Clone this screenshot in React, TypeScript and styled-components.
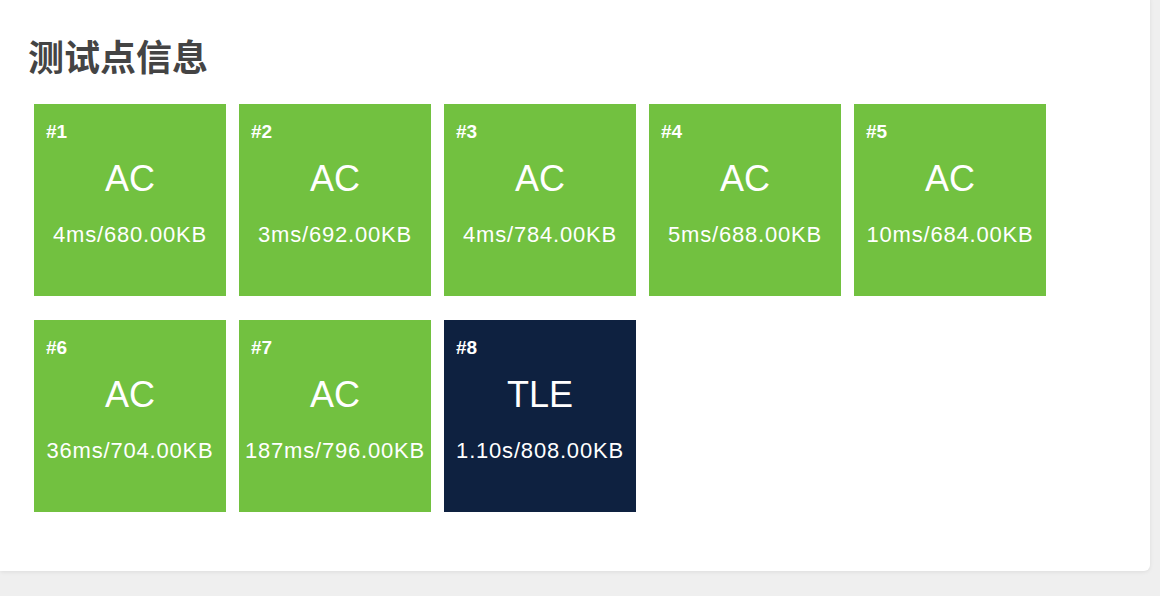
import React from 'react';
import styled, { createGlobalStyle } from 'styled-components';

const GlobalStyle = createGlobalStyle`
  html, body {
    margin: 0;
    padding: 0;
    background: #efefef;
  }
  body {
    font-family: 'Liberation Sans', Arial, 'Noto Sans CJK SC', sans-serif;
    overflow: hidden;
  }
`;

const Page = styled.div`
  width: 1160px;
  height: 596px;
  padding: 0 10px 19px 0;
  box-sizing: border-box;
`;

// carte blanche, coupée en haut et à gauche
const Card = styled.section`
  height: 100%;
  margin-top: -6px;
  background: #fff;
  border-radius: 0 6px 6px 0;
  box-shadow: 0 1px 4px rgba(0, 0, 0, 0.08);
  padding: 39px 0 0 28px;
  box-sizing: border-box;
`;

const Title = styled.h2`
  margin: 0;
  font-family: 'Noto Sans CJK SC', 'Liberation Sans', sans-serif;
  font-size: 36px;
  line-height: 44px;
  font-weight: 700;
  color: #444;
`;

const Grid = styled.div`
  display: grid;
  grid-template-columns: repeat(5, 192px);
  column-gap: 13px;
  row-gap: 24px;
  margin: 27px 0 0 6px;
`;

const Box = styled.div<{ $status: string }>`
  width: 192px;
  height: 192px;
  color: #fff;
  background: ${(p) => (p.$status === 'AC' ? '#72c140' : '#0e2140')};
`;

const Index = styled.div`
  margin: 17px 0 0 12px;
  font-size: 19px;
  line-height: 22px;
  font-weight: 700;
`;

const Verdict = styled.div`
  margin-top: 16px;
  text-align: center;
  font-size: 36px;
  line-height: 40px;
`;

const Stats = styled.div`
  margin-top: 23px;
  text-align: center;
  font-size: 22px;
  line-height: 26px;
  letter-spacing: 0.8px;
  white-space: nowrap;
`;

const points = [
  { status: 'AC', time: '4ms', mem: '680.00KB' },
  { status: 'AC', time: '3ms', mem: '692.00KB' },
  { status: 'AC', time: '4ms', mem: '784.00KB' },
  { status: 'AC', time: '5ms', mem: '688.00KB' },
  { status: 'AC', time: '10ms', mem: '684.00KB' },
  { status: 'AC', time: '36ms', mem: '704.00KB' },
  { status: 'AC', time: '187ms', mem: '796.00KB' },
  { status: 'TLE', time: '1.10s', mem: '808.00KB' },
];

const App = () => (
  <>
    <GlobalStyle />
    <Page>
      <Card>
        <Title>测试点信息</Title>
        <Grid>
          {points.map((pt, i) => (
            <Box key={i} $status={pt.status}>
              <Index>#{i + 1}</Index>
              <Verdict>{pt.status}</Verdict>
              <Stats>
                {pt.time}/{pt.mem}
              </Stats>
            </Box>
          ))}
        </Grid>
      </Card>
    </Page>
  </>
);

export default App;
